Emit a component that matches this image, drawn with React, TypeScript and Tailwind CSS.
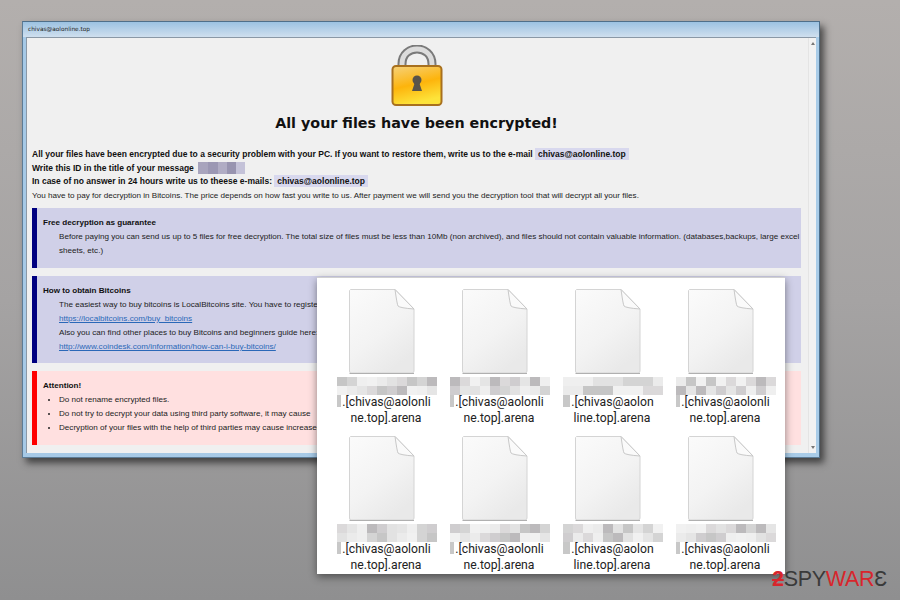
const shades = ["#e2e2e2", "#d4d4d4", "#ebebeb", "#c6c6c6", "#f1f1f1", "#dbd9da", "#bcbabc", "#e5e5e5", "#cfcdcf", "#efefef"];

// fake mosaic that hides the file names
function Mosaic({ seed }: { seed: number }) {
  const cells = [];
  for (let i = 0; i < 20; i++) {
    cells.push(shades[(i * 7 + seed * 3 + (i % 3) * seed) % shades.length]);
  }
  return (
    <div className="absolute left-[12px] top-[1px] w-[100px]">
      <div className="grid grid-cols-10">
        {cells.map((c, i) => (
          <div key={i} className="h-[9px]" style={{ backgroundColor: c }} />
        ))}
      </div>
      <div className="w-[9px] h-[12px] bg-[#c8c8c8]" />
    </div>
  );
}

function FileIcon() {
  return (
    <svg width="68" height="87" viewBox="0 0 68 87" className="mx-auto">
      <defs>
        <linearGradient id="page" x1="0" y1="0" x2="0.6" y2="1">
          <stop offset="0" stopColor="#fbfbfb" />
          <stop offset="0.6" stopColor="#f3f3f3" />
          <stop offset="1" stopColor="#e9e9e9" />
        </linearGradient>
      </defs>
      <path d="M2.5 1.5 H47 L66 21 V83 Q66 85 64 85 H3 Q1.5 85 1.5 83 V2.5 Z" fill="url(#page)" stroke="#d4d4d4" strokeWidth="1" />
      <path d="M1.5 85.5 H66" stroke="#b0b0b0" strokeWidth="1.2" />
      <path d="M47 1.5 Q49 16 50 18 Q52 20 66 21 Z" fill="#fafafa" stroke="#c8c8c8" strokeWidth="1" />
    </svg>
  );
}

function FileItem({ seed, a, b }: { seed: number; a: string; b: string }) {
  return (
    <div className="w-[113px] h-[147px] pt-[10px]">
      <FileIcon />
      <div className="relative h-[48px] mt-[1px]">
        <Mosaic seed={seed} />
        <div className="relative pl-[9px] pt-[19px] font-['Roboto',sans-serif] text-[12.2px] leading-[15px] text-[#222] text-center whitespace-nowrap">
          <div className="relative h-[15px]"><span className="bg-white pl-[1px]">{a}</span></div>
          <div className="pt-[1px]">{b}</div>
        </div>
      </div>
    </div>
  );
}

function Lock() {
  return (
    <svg width="52" height="62" viewBox="0 0 52 62" className="mx-auto">
      <defs>
        <linearGradient id="body" x1="0" y1="0" x2="0.3" y2="1">
          <stop offset="0" stopColor="#f6d27c" />
          <stop offset="0.55" stopColor="#fdb40c" />
          <stop offset="1" stopColor="#fde33a" />
        </linearGradient>
      </defs>
      <path d="M11 24 V19 C11 -1 41 -1 41 19 V24" fill="none" stroke="#7a7a7a" strokeWidth="9" />
      <path d="M11 24 V19 C11 -1 41 -1 41 19 V24" fill="none" stroke="#dcdcdc" strokeWidth="5" />
      <rect x="1.5" y="21" width="49" height="39" rx="3.5" fill="url(#body)" stroke="#a8701e" strokeWidth="2" />
      <circle cx="26" cy="35" r="4.5" fill="#59534a" />
      <path d="M24 37 L21 46 H31 L28 37 Z" fill="#59534a" />
    </svg>
  );
}

function Block({ bar, bg, title, children }: { bar: string; bg: string; title: string; children: React.ReactNode }) {
  return (
    <div className={`flex ${bg}`}>
      <div className={`w-[5px] shrink-0 ${bar}`} />
      <div className="pl-[6px] pr-[1px] pt-[8px] pb-[9.5px] min-w-0 flex-1">
        <div className="font-bold text-[8.1px] leading-[14px] text-[#111]">{title}</div>
        {children}
      </div>
    </div>
  );
}

const Arrow = ({ up }: { up?: boolean }) => (
  <div className={`w-0 h-0 border-x-[2px] border-x-transparent ${up ? "border-b-[3px] border-b-[#777]" : "border-t-[3px] border-t-[#777]"}`} />
);

export default function App() {
  return (
    <div className="relative w-[900px] h-[600px] overflow-hidden pl-[22px] pt-[21px] bg-gradient-to-b from-[#b3afad] via-[#a5a3a3] to-[#8f8f90]">
      {/* window */}
      <div className="w-[798px] h-[437px] flex flex-col border-t border-t-[#4f6f8a] border-l border-l-[#5d7c96] border-r border-r-[#4f6f8a] border-b border-b-[#5d7c96] shadow-[4px_5px_7px_rgba(30,30,30,0.7)] bg-gradient-to-r from-[#a6c9e6] to-[#a9cce8]">
        <div className="h-[15px] shrink-0 pl-[5px] bg-gradient-to-b from-[#9cc2e2] to-[#cfdfee] font-['DejaVu_Sans',sans-serif] text-[5.8px] leading-[15px] text-[#222]">
          chivas@aolonline.top
        </div>
        <div className="flex flex-1 min-h-0 mx-[3px] mb-[4px] border-t border-t-[#8a98a6] border-l border-l-[#8a98a6] bg-[#f0f0f0] overflow-hidden">
          <div className="flex-1 min-w-0 pl-[5px] pr-[7px] pt-[7px]">
            <Lock />
            <h1 className="mt-[6px] text-center font-['DejaVu_Sans',sans-serif] font-bold text-[14.3px] leading-[20px] text-[#111]">
              All your files have been encrypted!
            </h1>
            <div className="mt-[15px] font-['Liberation_Sans',sans-serif] text-[8.5px] leading-[13.6px] text-[#111] whitespace-nowrap">
              <div className="font-bold">
                All your files have been encrypted due to a security problem with your PC. If you want to restore them, write us to the e-mail{" "}
                <span className="bg-[#d8d8ee] px-[3px] py-[1px]">chivas@aolonline.top</span>
              </div>
              <div className="font-bold flex items-center">
                Write this ID in the title of your message
                <span className="ml-[4px] flex h-[12px]">
                  <span className="w-[10px] bg-[#a8a4bd]" />
                  <span className="w-[10px] bg-[#9b97b3]" />
                  <span className="w-[9px] bg-[#b0acc4]" />
                  <span className="w-[9px] bg-[#9894b0]" />
                  <span className="w-[9px] bg-[#c4c2d8]" />
                </span>
              </div>
              <div className="font-bold">
                In case of no answer in 24 hours write us to theese e-mails:{" "}
                <span className="bg-[#d8d8ee] px-[3px] py-[1px]">chivas@aolonline.top</span>
              </div>
              <div className="text-[8.1px] text-[#222]">
                You have to pay for decryption in Bitcoins. The price depends on how fast you write to us. After payment we will send you the decryption tool that will decrypt all your files.
              </div>
            </div>

            <div className="mt-[6px] flex flex-col gap-[8px] font-['Liberation_Sans',sans-serif] text-[8.1px] leading-[14px] text-[#222]">
              <Block bar="bg-[#000080]" bg="bg-[#d0d0e8]" title="Free decryption as guarantee">
                <p className="pl-[16px]">
                  Before paying you can send us up to 5 files for free decryption. The total size of files must be less than 10Mb (non archived), and files should not contain valuable information. (databases,backups, large excel sheets, etc.)
                </p>
              </Block>
              <Block bar="bg-[#000080]" bg="bg-[#d0d0e8]" title="How to obtain Bitcoins">
                <div className="pl-[16px] whitespace-nowrap">
                  <div>The easiest way to buy bitcoins is LocalBitcoins site. You have to register</div>
                  <div className="text-[#2a68b8] underline">https://localbitcoins.com/buy_bitcoins</div>
                  <div>Also you can find other places to buy Bitcoins and beginners guide here:</div>
                  <div className="text-[#2a68b8] underline">http://www.coindesk.com/information/how-can-i-buy-bitcoins/</div>
                </div>
              </Block>
              <Block bar="bg-[#ff0000]" bg="bg-[#ffe0e0]" title="Attention!">
                <ul className="pl-[16px] list-disc list-outside whitespace-nowrap">
                  <li>Do not rename encrypted files.</li>
                  <li>Do not try to decrypt your data using third party software, it may cause</li>
                  <li>Decryption of your files with the help of third parties may cause increased</li>
                </ul>
              </Block>
            </div>
          </div>
          <div className="w-[8px] shrink-0 border-l border-l-[#e4e4e4] bg-[#f2f2f2] flex flex-col items-center justify-between py-[4px]">
            <Arrow up />
            <Arrow />
          </div>
        </div>
      </div>

      {/* explorer panel over the note */}
      <div className="absolute left-[317px] top-[277px] w-[468px] h-[297px] bg-white border-t border-t-[#d0d0d0] shadow-[0_3px_8px_rgba(0,0,0,0.45)] pl-[8px] grid grid-cols-[repeat(4,113px)] content-start">
        <FileItem seed={1} a=".[chivas@aolonli" b="ne.top].arena" />
        <FileItem seed={2} a=".[chivas@aolonli" b="ne.top].arena" />
        <FileItem seed={3} a=".[chivas@aolon" b="line.top].arena" />
        <FileItem seed={4} a=".[chivas@aolonli" b="ne.top].arena" />
        <FileItem seed={5} a=".[chivas@aolonli" b="ne.top].arena" />
        <FileItem seed={6} a=".[chivas@aolonli" b="ne.top].arena" />
        <FileItem seed={7} a=".[chivas@aolon" b="line.top].arena" />
        <FileItem seed={8} a=".[chivas@aolonli" b="ne.top].arena" />
      </div>

      {/* watermark */}
      <div className="absolute left-[772px] top-[566px] font-['Liberation_Sans',sans-serif] text-[21.5px] leading-[26px] tracking-[-0.3px] whitespace-nowrap">
        <span className="text-[#d8262c] font-bold line-through">2</span>
        <span className="text-[#3a3a3a]">SPY</span>
        <span className="text-[#d8262c]">WAR</span>
        <span className="text-[#3a3a3a]">Ɛ</span>
      </div>
    </div>
  );
}
